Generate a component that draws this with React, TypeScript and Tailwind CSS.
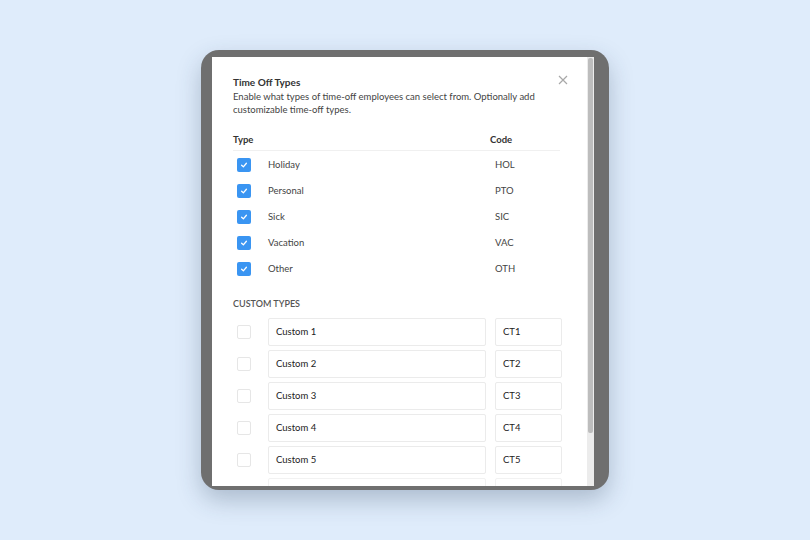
const fixed = [
  { name: "Holiday", code: "HOL" },
  { name: "Personal", code: "PTO" },
  { name: "Sick", code: "SIC" },
  { name: "Vacation", code: "VAC" },
  { name: "Other", code: "OTH" },
];

const custom = ["1", "2", "3", "4", "5"];

function CheckBox({ checked }: { checked: boolean }) {
  if (!checked) {
    return <div className="h-[14px] w-[14px] rounded-[2px] border border-[#e6e6e6] bg-white" />;
  }
  return (
    <div className="flex h-[14px] w-[14px] items-center justify-center rounded-[2px] bg-[#3a95f2]">
      <svg width="8" height="8" viewBox="0 0 10 10" fill="none">
        <path d="M2 5.3 L4.2 7.3 L8 2.8" stroke="white" strokeWidth="1.6" strokeLinecap="round" strokeLinejoin="round" />
      </svg>
    </div>
  );
}

export default function App() {
  return (
    <div
      className="flex h-[540px] w-[810px] items-center justify-center bg-[#dfecfb]"
      style={{ fontFamily: "Lato, 'Open Sans', sans-serif" }}
    >
      <div className="flex h-[440px] w-[408px] rounded-[18px] bg-[#6f6f6f] pb-[4px] pl-[11px] pr-[15px] pt-[7px] shadow-[0_10px_24px_rgba(40,60,90,0.28)]">
        <div className="relative flex-1 overflow-hidden bg-white pl-[21px] pt-[18px]">
          <button className="absolute right-[19px] top-[18px] text-[#a8a8a8]">
            <svg width="10" height="10" viewBox="0 0 10 10">
              <path d="M1 1 L9 9 M9 1 L1 9" stroke="currentColor" strokeWidth="1.2" />
            </svg>
          </button>
          <h2 className="text-[10px] font-bold leading-[14px] text-[#333]">Time Off Types</h2>
          <p className="mt-[1px] w-[310px] text-[9.5px] leading-[13px] text-[#444]">
            Enable what types of time-off employees can select from. Optionally add customizable time-off types.
          </p>

          <div className="mt-[17px] flex w-[327px] border-b border-[#f0f0f0] pb-[3px] text-[9.5px] font-bold leading-[14px] text-[#333]">
            <span className="w-[257px]">Type</span>
            <span>Code</span>
          </div>

          <div className="mt-[1px]">
            {fixed.map((t) => (
              <div key={t.name} className="flex h-[26px] items-center text-[9.5px] text-[#444]">
                <div className="w-[35px] pl-[4px]">
                  <CheckBox checked />
                </div>
                <span className="w-[227px]">{t.name}</span>
                <span>{t.code}</span>
              </div>
            ))}
          </div>

          <div className="mt-[16px] text-[9px] font-semibold uppercase leading-[12px] text-[#555]">Custom Types</div>

          <div className="mt-[8px] flex flex-col gap-[4px]">
            {custom.map((n) => (
              <div key={n} className="flex h-[28px] items-center text-[9.5px] text-[#222]">
                <div className="w-[35px] pl-[4px]">
                  <CheckBox checked={false} />
                </div>
                <div className="flex h-full w-[218px] items-center rounded-[2px] border border-[#ebebeb] px-[7px]">
                  Custom {n}
                </div>
                <div className="ml-[9px] flex h-full w-[67px] items-center rounded-[2px] border border-[#ebebeb] px-[7px]">
                  CT{n}
                </div>
              </div>
            ))}
            <div className="flex h-[28px]">
              <div className="w-[35px]" />
              <div className="h-full w-[218px] rounded-[2px] border border-[#f2f2f2]" />
              <div className="ml-[9px] h-full w-[67px] rounded-[2px] border border-[#f2f2f2]" />
            </div>
          </div>
        </div>
        <div className="flex w-[7px] bg-[#ececec] pl-[1px]">
          <div className="mt-[1px] h-[375px] w-[5px] rounded-[2px] bg-[#bdbdbd]" />
        </div>
      </div>
    </div>
  );
}
